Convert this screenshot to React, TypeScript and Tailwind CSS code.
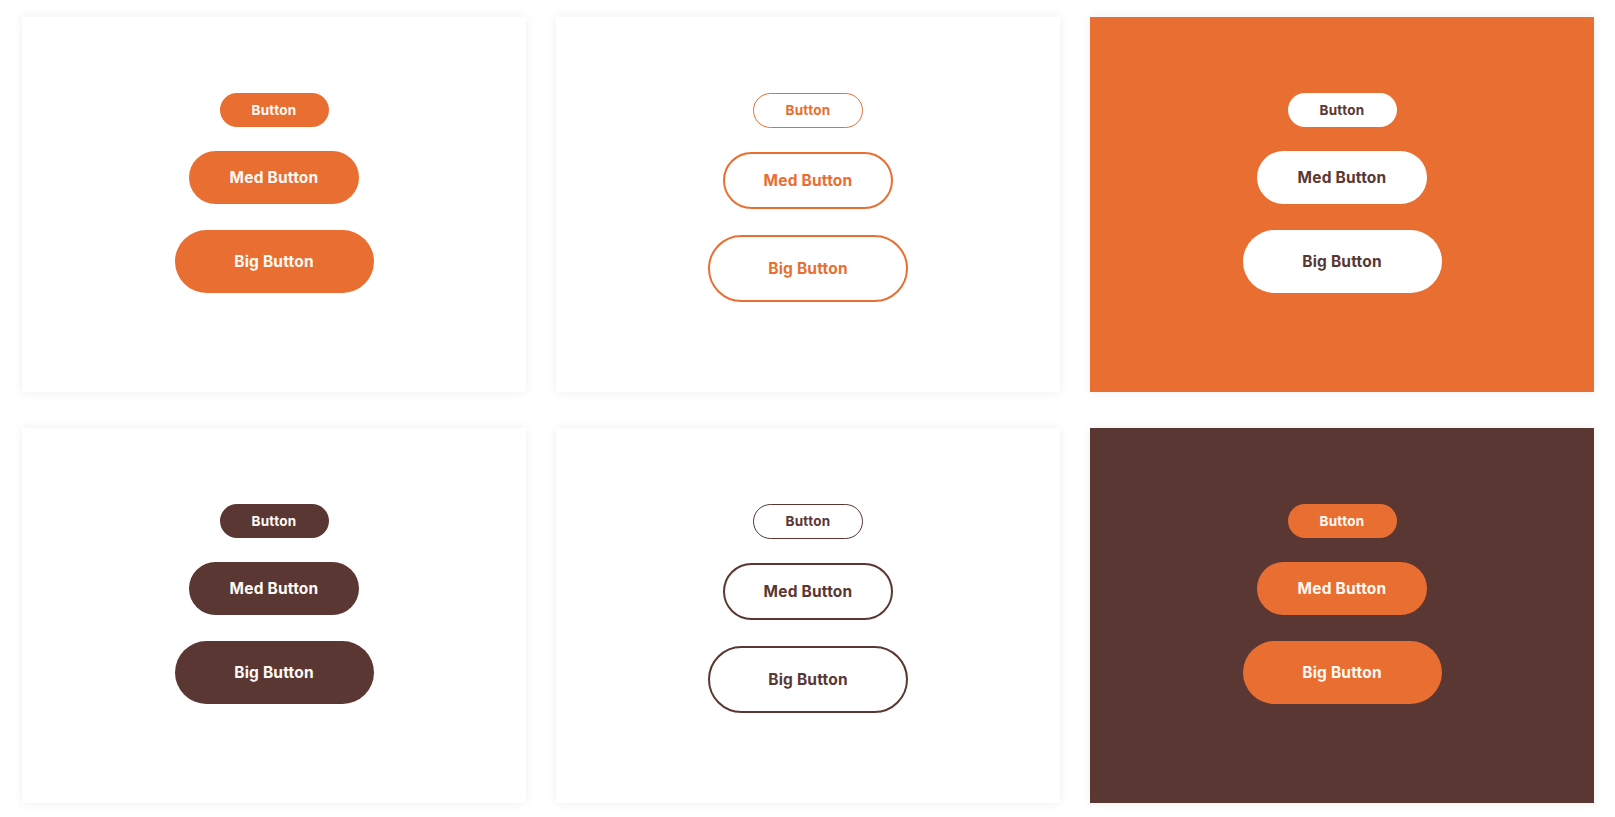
import React from "react";

type Variant = "solid" | "outline";

interface CardSpec {
	cardBg: string;
	variant: Variant;
	btnClass: string;
}

const font = { fontFamily: "Inter, Lato, sans-serif" };

const cards: CardSpec[] = [
	{ cardBg: "bg-white", variant: "solid", btnClass: "bg-[#e96e31] text-[#fffaf5]" },
	{ cardBg: "bg-white", variant: "outline", btnClass: "border-[#e96e31] text-[#e96e31]" },
	{ cardBg: "bg-[#e96e31]", variant: "solid", btnClass: "bg-white text-[#5a3733]" },
	{ cardBg: "bg-white", variant: "solid", btnClass: "bg-[#5a3733] text-[#fffaf5]" },
	{ cardBg: "bg-white", variant: "outline", btnClass: "border-[#5a3733] text-[#5a3733]" },
	{ cardBg: "bg-[#5a3733]", variant: "solid", btnClass: "bg-[#e96e31] text-[#fffaf5]" },
];

const ButtonCard = ({ cardBg, variant, btnClass }: CardSpec) => {
	const outline = variant === "outline";
	return (
		<div
			className={`${cardBg} h-[375px] shadow-[0_0_10px_rgba(0,0,0,0.07)] flex flex-col items-center pt-[76px]`}
		>
			{/* Small */}
			<button
				style={font}
				className={`${btnClass} ${
					outline ? "border w-[110px] h-[35px]" : "w-[109px] h-[34px]"
				} rounded-full text-[13.5px] font-bold tracking-[0.3px] flex items-center justify-center`}
			>
				Button
			</button>
			{/* Medium */}
			<button
				style={font}
				className={`${btnClass} ${
					outline ? "border-2 w-[170px] h-[57px]" : "w-[170px] h-[53px]"
				} mt-6 rounded-full text-[15.5px] font-bold tracking-[0.2px] flex items-center justify-center`}
			>
				Med Button
			</button>
			{/* Big */}
			<button
				style={font}
				className={`${btnClass} ${
					outline ? "border-2 w-[200px] h-[67px]" : "w-[199px] h-[63px]"
				} mt-[26px] rounded-full text-[15.5px] font-bold tracking-[0.2px] flex items-center justify-center`}
			>
				Big Button
			</button>
		</div>
	);
};

export default function App() {
	return (
		<div className="w-[1615px] h-[817px] bg-white pt-[17px] pl-[22px] pr-[21px]">
			<div className="grid grid-cols-3 gap-x-[30px] gap-y-[36px]">
				{cards.map((c, i) => (
					<ButtonCard key={i} {...c} />
				))}
			</div>
		</div>
	);
}
